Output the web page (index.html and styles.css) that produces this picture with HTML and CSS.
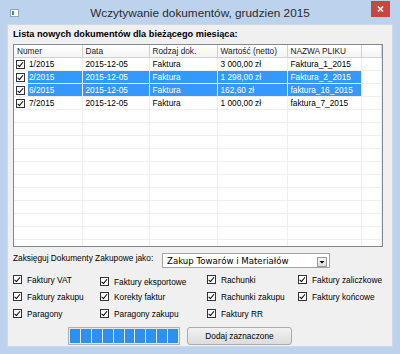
FILE: index.html
```html
<!DOCTYPE html>
<html lang="pl">
<head>
    <meta charset="UTF-8">
    <title>Wczytywanie dokumentów</title>
    <link rel="stylesheet" href="styles.css">
</head>
<body>
    <div class="window">
        <div class="titlebar">
            <span class="app-icon">
                <svg width="9" height="8" viewBox="0 0 9 8">
                    <rect x="0.5" y="0.5" width="8" height="7" fill="#fff" stroke="#8fa6bf"/>
                    <rect x="2" y="2" width="2" height="4" fill="#3f9b5e"/>
                </svg>
            </span>
            <span class="title">Wczytywanie dokumentów, grudzien 2015</span>
            <span class="close">
                <svg width="19" height="16" viewBox="0 0 19 16">
                    <path d="M7 5.5 L12 10.5 M12 5.5 L7 10.5" stroke="#fff" stroke-width="1.6"/>
                </svg>
            </span>
        </div>

        <div class="client">
            <div class="caption">Lista nowych dokumentów dla bieżącego miesiąca:</div>

            <div class="grid">
                <table>
                    <colgroup>
                        <col style="width:68px">
                        <col style="width:67px">
                        <col style="width:68px">
                        <col style="width:70px">
                        <col style="width:74px">
                        <col>
                    </colgroup>
                    <thead>
                        <tr><th>Numer</th><th>Data</th><th>Rodzaj dok.</th><th>Wartość (netto)</th><th>NAZWA PLIKU</th><th></th></tr>
                    </thead>
                    <tbody>
                        <tr>
                            <td><div class="num-cell"><span class="cb"></span><span class="num">1/2015</span></div></td>
                            <td>2015-12-05</td><td>Faktura</td><td>3 000,00 zł</td><td>Faktura_1_2015</td><td></td>
                        </tr>
                        <tr class="selected">
                            <td><div class="num-cell"><span class="cb"></span><span class="num">2/2015</span></div></td>
                            <td>2015-12-05</td><td>Faktura</td><td>1 298,00 zł</td><td>Faktura_2_2015</td><td></td>
                        </tr>
                        <tr class="selected">
                            <td><div class="num-cell"><span class="cb"></span><span class="num">6/2015</span></div></td>
                            <td>2015-12-05</td><td>Faktura</td><td>162,60 zł</td><td>faktura_16_2015</td><td></td>
                        </tr>
                        <tr>
                            <td><div class="num-cell"><span class="cb"></span><span class="num">7/2015</span></div></td>
                            <td>2015-12-05</td><td>Faktura</td><td>1 000,00 zł</td><td>faktura_7_2015</td><td></td>
                        </tr>
                        <tr><td></td><td></td><td></td><td></td><td></td><td></td></tr>
                        <tr><td></td><td></td><td></td><td></td><td></td><td></td></tr>
                        <tr><td></td><td></td><td></td><td></td><td></td><td></td></tr>
                        <tr><td></td><td></td><td></td><td></td><td></td><td></td></tr>
                        <tr><td></td><td></td><td></td><td></td><td></td><td></td></tr>
                        <tr><td></td><td></td><td></td><td></td><td></td><td></td></tr>
                        <tr><td></td><td></td><td></td><td></td><td></td><td></td></tr>
                        <tr><td></td><td></td><td></td><td></td><td></td><td></td></tr>
                        <tr><td></td><td></td><td></td><td></td><td></td><td></td></tr>
                        <tr><td></td><td></td><td></td><td></td><td></td><td></td></tr>
                        <tr><td></td><td></td><td></td><td></td><td></td><td></td></tr>
                    </tbody>
                </table>
            </div>

            <div class="post-row">
                <span class="post-label">Zaksięguj Dokumenty Zakupowe jako:</span>
                <div class="combo">
                    <span class="combo-text">Zakup Towarów i Materiałów</span>
                    <span class="combo-btn">
                        <svg width="8" height="8" viewBox="0 0 8 8"><path d="M1.5 3 L6.5 3 L4 5.5 Z" fill="#000"/></svg>
                    </span>
                </div>
            </div>

            <div class="types">
                <label class="opt"><span class="cb"></span>Faktury VAT</label>
                <label class="opt low"><span class="cb"></span>Faktury eksportowe</label>
                <label class="opt"><span class="cb"></span>Rachunki</label>
                <label class="opt"><span class="cb"></span>Faktury zaliczkowe</label>
                <label class="opt"><span class="cb"></span>Faktury zakupu</label>
                <label class="opt"><span class="cb"></span>Korekty faktur</label>
                <label class="opt"><span class="cb"></span>Rachunki zakupu</label>
                <label class="opt"><span class="cb"></span>Faktury końcowe</label>
                <label class="opt"><span class="cb"></span>Paragony</label>
                <label class="opt"><span class="cb"></span>Paragony zakupu</label>
                <label class="opt"><span class="cb"></span>Faktury RR</label>
            </div>

            <div class="actions">
                <div class="progress">
                    <span></span><span></span><span></span><span></span><span></span>
                    <span></span><span></span><span></span><span></span><span></span>
                </div>
                <button class="btn">Dodaj zaznaczone</button>
            </div>
        </div>
    </div>
</body>
</html>
```

FILE: styles.css
```css
body {
    margin: 0;
    font-family: "Liberation Sans", Arial, sans-serif;
    font-size: 8.3px;
    color: #000;
}
.window {
    width: 400px;
    height: 354px;
    box-sizing: border-box;
    background: #bdd3ed;
    padding: 0 7px 7px 7px;
}
.titlebar {
    height: 24px;
    margin: 0 -7px;
    display: grid;
    grid-template-columns: 1fr auto 1fr;
}
.app-icon {
    padding: 9px 0 0 10px;
}
.app-icon svg {
    display: block;
}
.title {
    font-size: 11.8px;
    color: #2b2b2b;
    line-height: 27px;
}
.close {
    justify-self: end;
    margin: 1px 10px 0 0;
    width: 19px;
    height: 16px;
    background: #c7473f;
}
.close svg {
    display: block;
}
.client {
    height: 323px;
    box-sizing: border-box;
    background: #f0f0f0;
    border: 1px solid #cdd9e7;
    padding: 4px 9px 1px 5px;
}
.caption {
    font-weight: bold;
    font-size: 9.2px;
    line-height: 11px;
}
.grid {
    margin-top: 4px;
    height: 203px;
    box-sizing: border-box;
    border: 1px solid #848890;
    background: #fff;
    overflow: hidden;
}
.grid table {
    width: 100%;
    table-layout: fixed;
    border-collapse: collapse;
}
.grid th,
.grid td {
    height: 12px;
    padding: 0 0 0 3px;
    line-height: 12px;
    text-align: left;
    white-space: nowrap;
    overflow: hidden;
}
.grid th {
    font-weight: normal;
    color: #222;
    background: linear-gradient(#ffffff, #f4f4f4);
    border-right: 1px solid #d2d2d2;
    border-bottom: 1px solid #d2d2d2;
}
.grid td {
    border-right: 1px solid #efefef;
    border-bottom: 1px solid #efefef;
}
.grid td:first-child {
    padding-left: 2px;
}
.num-cell {
    display: flex;
    align-items: center;
    height: 12px;
}
.num {
    flex: 1;
    margin-left: 3px;
    padding-left: 1px;
    line-height: 12px;
}
.selected td + td,
.selected .num {
    background: #3399ff;
    color: #fff;
}
.selected td:last-child {
    background: #fff;
}
.cb {
    flex: none;
    display: inline-block;
    position: relative;
    width: 9px;
    height: 9px;
    box-sizing: border-box;
    border: 1px solid #333;
    background: #fff;
}
.cb::after {
    content: "";
    position: absolute;
    left: 2.3px;
    top: 0;
    width: 2px;
    height: 4.5px;
    border: solid #000;
    border-width: 0 1.6px 1.6px 0;
    transform: rotate(40deg);
}
.post-row {
    display: flex;
    align-items: flex-start;
    margin-top: 6px;
    height: 15px;
}
.post-label {
    width: 149px;
    line-height: 11px;
}
.combo {
    width: 168px;
    height: 15px;
    box-sizing: border-box;
    border: 1px solid #a3a3a3;
    background: #fff;
    display: flex;
    align-items: center;
    padding: 0 2px 0 4px;
}
.combo-text {
    flex: 1;
    font-family: "DejaVu Sans", Verdana, sans-serif;
    font-size: 8.6px;
    padding-top: 1px;
}
.combo-btn {
    width: 10px;
    height: 10px;
    box-sizing: border-box;
    border: 1px solid #9a9a9a;
    background: linear-gradient(#f6f6f6, #dedede);
    margin-top: 2px;
    display: flex;
    align-items: center;
    justify-content: center;
}
.combo-btn svg {
    display: block;
}
.types {
    margin-top: 3px;
    display: grid;
    grid-template-columns: 87px 107px 91px auto;
    grid-auto-rows: 17px;
    align-items: center;
}
.opt {
    display: flex;
    align-items: center;
    gap: 5px;
    white-space: nowrap;
}
.opt.low {
    margin-top: 4px;
}
.actions {
    margin-top: 5px;
    height: 18px;
    display: flex;
    gap: 7px;
    padding-left: 55px;
}
.progress {
    width: 112px;
    box-sizing: border-box;
    border: 1px solid #b2b2b2;
    background: #e6e6e6;
    padding: 1px;
    display: flex;
    gap: 1px;
}
.progress span {
    flex: 1;
    background: #2d8ff0;
}
.btn {
    width: 105px;
    height: 18px;
    border: 1px solid #acacac;
    border-radius: 3px;
    background: linear-gradient(#f2f2f2, #dcdcdc);
    font-family: "Liberation Sans", Arial, sans-serif;
    font-size: 8.3px;
    color: #000;
    padding: 0;
}
```
